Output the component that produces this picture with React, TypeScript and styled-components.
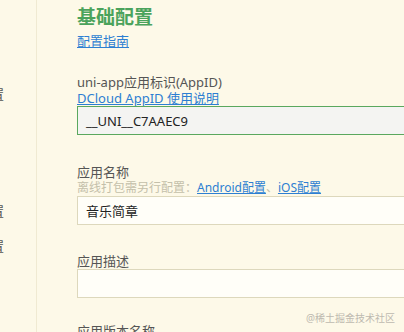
import styled, { createGlobalStyle } from 'styled-components'

const GlobalStyle = createGlobalStyle`
    html, body {
        margin: 0;
        padding: 0;
        background: #fdf9e8;
    }
    body {
        font-family: "Noto Sans", "Noto Sans CJK SC", sans-serif;
    }
`

const Page = styled.div`
    position: relative;
    display: flex;
    width: 404px;
    height: 332px;
    overflow: hidden;
    background: #fdf9e8;
`

const Sidebar = styled.nav`
    flex: 0 0 36px;
    border-right: 1px solid #f0ead2;
    overflow: hidden;
    padding-top: 86px;
`

const NavItem = styled.div<{ $gap?: number }>`
    display: flex;
    justify-content: flex-end;
    width: 4px;
    margin-top: ${p => p.$gap || 0}px;
    white-space: nowrap;
    font-size: 13px;
    line-height: 16px;
    color: #555;
`

const Main = styled.main`
    flex: 1;
    padding: 4px 0 0 40px;
    min-width: 0;
`

const Title = styled.h1`
    margin: 0;
    font-size: 19px;
    line-height: 26px;
    font-weight: 700;
    color: #4ba35c;
`

const Link = styled.a`
    color: #2d7fd2;
    text-decoration: underline;
    text-underline-offset: 1px;
    cursor: pointer;
`

const Guide = styled.div`
    margin-top: 3px;
    font-size: 13px;
    line-height: 16px;
`

const Field = styled.div<{ $top: number }>`
    margin-top: ${p => p.$top}px;
`

const Label = styled.div`
    font-size: 13px;
    line-height: 16px;
    color: #555;
`

const Hint = styled.div`
    font-size: 12px;
    line-height: 16px;
    color: #c4c0aa;
    white-space: nowrap;
`

const SubLink = styled.div`
    font-size: 13px;
    line-height: 16px;
`

const Input = styled.div<{ $locked?: boolean }>`
    box-sizing: border-box;
    width: 360px;
    height: 29px;
    padding: 0 8px;
    display: flex;
    align-items: center;
    font-size: 13px;
    color: #222;
    border: 1px solid ${p => (p.$locked ? '#5aa85e' : '#ddd8bc')};
    background: ${p => (p.$locked ? '#f4f4f2' : '#fffef8')};
`

const Watermark = styled.div`
    position: absolute;
    right: 9px;
    bottom: 8px;
    font-size: 10px;
    line-height: 12px;
    color: #bdbab0;
`

export default function App() {
    return (
        <Page>
            <GlobalStyle />
            <Sidebar>
                <NavItem>基础配置</NavItem>
                <NavItem $gap={101}>图标配置</NavItem>
                <NavItem $gap={19}>启动界面配置</NavItem>
            </Sidebar>
            <Main>
                <Title>基础配置</Title>
                <Guide><Link>配置指南</Link></Guide>
                <Field $top={25}>
                    <Label>uni-app应用标识(AppID)</Label>
                    <SubLink><Link>DCloud AppID 使用说明</Link></SubLink>
                    <Input $locked>__UNI__C7AAEC9</Input>
                </Field>
                <Field $top={29}>
                    <Label>应用名称</Label>
                    <Hint>离线打包需另行配置：<Link>Android配置</Link>、<Link>iOS配置</Link></Hint>
                    <Input>音乐简章</Input>
                </Field>
                <Field $top={28}>
                    <Label>应用描述</Label>
                    <Input />
                </Field>
                <Field $top={25}>
                    <Label>应用版本名称</Label>
                </Field>
            </Main>
            <Watermark>@稀土掘金技术社区</Watermark>
        </Page>
    )
}
